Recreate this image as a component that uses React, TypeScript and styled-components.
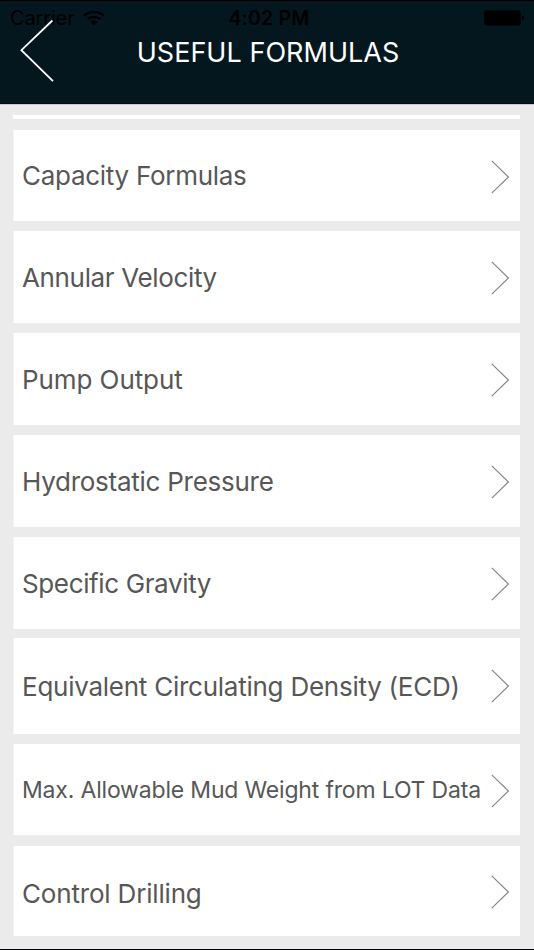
import React from 'react';
import styled, { createGlobalStyle } from 'styled-components';

const GlobalStyle = createGlobalStyle`
  * { box-sizing: border-box; }
  body { margin: 0; background: #ebebeb; }
`;

const Screen = styled.div`
  display: flex;
  flex-direction: column;
  width: 534px;
  height: 950px;
  overflow: hidden;
  background: #ebebeb;
  border-bottom: 1px solid #020308;
  font-family: Inter, "Liberation Sans", sans-serif;
`;

const Header = styled.header`
  position: relative;
  flex: none;
  height: 104px;
  background: #04171e;
  border-top: 1px solid #000;
  border-bottom: 1px solid #010a12;
  box-shadow: 0 1px 0 #c9c8ce;
`;

const StatusBar = styled.div`
  display: grid;
  grid-template-columns: 1fr auto 1fr;
  align-items: center;
  height: 34px;
  padding: 0 9px 0 10px;
  color: #000;
`;

const Network = styled.div`
  display: flex;
  align-items: center;
  gap: 8px;
`;

const Carrier = styled.span`
  font-size: 20px;
  letter-spacing: -0.15px;
`;

const Clock = styled.span`
  padding-left: 3px;
  font-size: 19.5px;
  font-weight: 600;
  letter-spacing: 0.2px;
`;

const BatteryIcon = styled.svg`
  justify-self: end;
`;

const TitleBar = styled.div`
  display: flex;
  justify-content: center;
  height: 36px;
`;

const Title = styled.h1`
  margin: 0;
  padding-left: 2px;
  color: #fff;
  font-size: 27px;
  font-weight: 400;
  line-height: 35px;
  letter-spacing: 0.03px;
  white-space: nowrap;
`;

const BackButton = styled.button`
  position: absolute;
  top: 15px;
  left: 16px;
  display: flex;
  padding: 0;
  border: 0;
  background: none;
`;

const List = styled.ul`
  display: flex;
  flex-direction: column;
  margin: 0;
  padding: 11px 14px 0 13px;
  list-style: none;
`;

const ScrolledCard = styled.li`
  height: 4px;
  margin-bottom: 11px;
  background: #fff;
`;

const Card = styled.li<{ $height: number; $gap: number }>`
  display: flex;
  flex: none;
  align-items: center;
  justify-content: space-between;
  height: ${({ $height }) => $height}px;
  margin-bottom: ${({ $gap }) => $gap}px;
  padding: 0 10px 0 9px;
  background: #fff;
  box-shadow: inset 1px 0 0 #f5f5f5;
`;

const Label = styled.span<{ $size: number; $tracking: number; $drop: number }>`
  padding-top: ${({ $drop }) => $drop}px;
  color: #575757;
  font-size: ${({ $size }) => $size}px;
  line-height: 32px;
  letter-spacing: ${({ $tracking }) => $tracking}px;
  white-space: nowrap;
`;

const Chevron = styled.svg<{ $drop: number }>`
  flex: none;
  margin-top: ${({ $drop }) => $drop}px;
`;

interface Formula {
  name: string;
  tracking: number;
  size?: number;
  height?: number;
  gap?: number;
  drop?: number;
  chevronDrop?: number;
}

const formulas: Formula[] = [
  { name: 'Capacity Formulas', tracking: -0.28, height: 91, drop: 1 },
  { name: 'Annular Velocity', tracking: -0.35 },
  { name: 'Pump Output', tracking: -0.08 },
  { name: 'Hydrostatic Pressure', tracking: -0.26 },
  { name: 'Specific Gravity', tracking: -0.37, gap: 9 },
  { name: 'Equivalent Circulating Density (ECD)', tracking: -0.25, height: 96, chevronDrop: 0 },
  { name: 'Max. Allowable Mud Weight from LOT Data', tracking: -0.18, size: 23, height: 91, gap: 11, drop: 1 },
  { name: 'Control Drilling', tracking: -0.18, height: 90, drop: 6 },
];

export default function App() {
  return (
    <>
      <GlobalStyle />
      <Screen>
        <Header>
          <StatusBar>
            <Network>
              <Carrier>Carrier</Carrier>
              <svg width="22" height="16" viewBox="0 0 22 16" fill="none" stroke="#000" strokeWidth="2.3">
                <path d="M1.2 5.7C6.7.5 15.3.5 20.8 5.7" />
                <path d="M4.8 9.2c3.5-3.2 8.9-3.2 12.4 0" />
                <path d="M7.4 11.9c2-1.9 5.2-1.9 7.2 0L11 15.4z" fill="#000" stroke="none" />
              </svg>
            </Network>
            <Clock>4:02 PM</Clock>
            <BatteryIcon width="41" height="16" viewBox="0 0 41 16">
              <rect x="0.1" y="0.3" width="36.6" height="15.2" rx="2" />
              <path d="M38 5.2c2.2.6 2.2 4.8 0 5.4z" />
            </BatteryIcon>
          </StatusBar>
          <TitleBar>
            <Title>USEFUL FORMULAS</Title>
          </TitleBar>
          <BackButton aria-label="Back">
            <svg width="42" height="70" viewBox="0 0 42 70" fill="none" stroke="#fff" strokeWidth="1.8">
              <path d="M36.4 4.5L5.4 34.2L37 65.2" />
            </svg>
          </BackButton>
        </Header>
        <List>
          <ScrolledCard />
          {formulas.map(({ name, tracking, size = 26, height = 92, gap = 10, drop = 2, chevronDrop = 2 }) => (
            <Card key={name} $height={height} $gap={gap}>
              <Label $size={size} $tracking={tracking} $drop={drop}>
                {name}
              </Label>
              <Chevron $drop={chevronDrop} width="20" height="34" viewBox="0 0 20 34" fill="none" stroke="#858585" strokeWidth="1.15">
                <path d="M1.8 0.8L18.4 17L1.8 33.2" />
              </Chevron>
            </Card>
          ))}
        </List>
      </Screen>
    </>
  );
}
